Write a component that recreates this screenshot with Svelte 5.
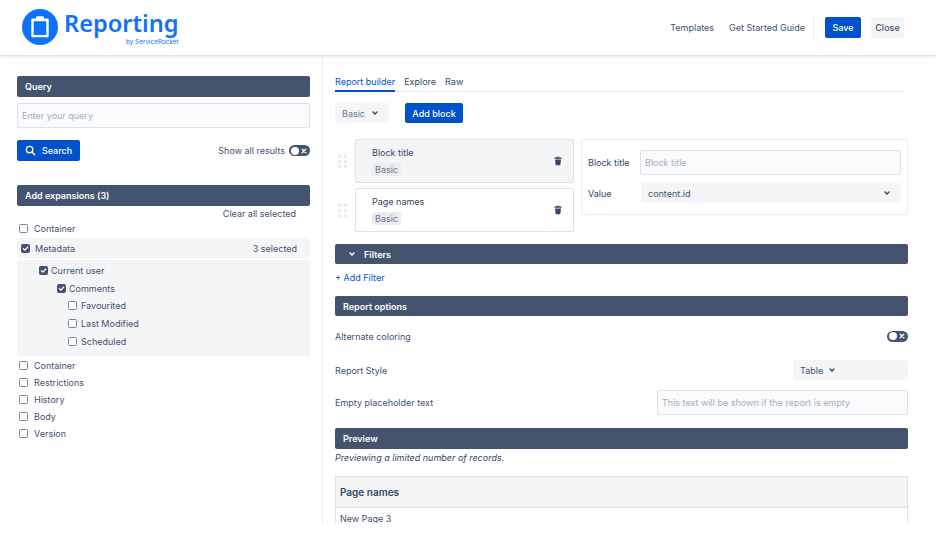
<script>
	const nested = [
		{ label: 'Current user', checked: true, level: 'l1' },
		{ label: 'Comments', checked: true, level: 'l2' },
		{ label: 'Favourited', checked: false, level: 'l3' },
		{ label: 'Last Modified', checked: false, level: 'l3' },
		{ label: 'Scheduled', checked: false, level: 'l3' }
	];
	const others = ['Container', 'Restrictions', 'History', 'Body', 'Version'];
	const blocks = [
		{ title: 'Block title', active: true },
		{ title: 'Page names', active: false }
	];
</script>

{#snippet chevron()}
	<svg class="chev" viewBox="0 0 8 8" width="8" height="8"><path d="M2 3 4 5l2-2" fill="none" stroke="currentColor" stroke-width="1.4" stroke-linecap="round" stroke-linejoin="round" /></svg>
{/snippet}

{#snippet check(on)}
	<span class="box" class:on>
		{#if on}<svg viewBox="0 0 9 9" width="9" height="9"><path d="M2.300 4.600 3.900 6.100 6.800 3" fill="none" stroke="#fff" stroke-width="1.300" stroke-linecap="round" stroke-linejoin="round" /></svg>{/if}
	</span>
{/snippet}

{#snippet toggle()}
	<span class="toggle">
		<span class="knob"></span>
		<svg viewBox="0 0 6 6" width="6" height="6"><path d="M1.200 1.200 4.800 4.800M4.800 1.200 1.200 4.800" stroke="#fff" stroke-width="1.300" stroke-linecap="round" /></svg>
	</span>
{/snippet}

{#snippet trash()}
	<svg class="trash" viewBox="0 0 10 10" width="10" height="10"><path d="M3.800.8h2.400l.4.8h2v1.100H1.400V1.600h2zM2 3.400h6l-.6 5.200c0 .4-.3.6-.7.6H3.300c-.4 0-.7-.2-.7-.6z" fill="#344563" /></svg>
{/snippet}

<div class="page">
	<header>
		<div class="logo">
			<svg viewBox="0 0 36 36" width="36" height="36">
				<circle cx="18" cy="18" r="18" fill="#0f72fb" />
				<path d="M10.500 9.500h3.300l.7-2.300h7l.7 2.300h3.300c.7 0 1.200.5 1.200 1.200v16.300c0 .7-.5 1.200-1.200 1.200h-15c-.7 0-1.200-.5-1.200-1.200V10.700c0-.7.5-1.200 1.200-1.200z" fill="#fff" />
				<rect x="11.700" y="12.200" width="12.600" height="13.800" rx=".5" fill="#0f72fb" />
			</svg>
			<div class="wordmark">
				<span class="name">Reporting</span>
				<span class="by">by ServiceRocket</span>
			</div>
		</div>
		<nav>
			<span class="link">Templates</span>
			<span class="link">Get Started Guide</span>
			<span class="sep"></span>
			<button class="btn primary save">Save</button>
			<button class="btn ghost">Close</button>
		</nav>
	</header>

	<main>
		<aside>
			<div class="bar">Query</div>
			<div class="input query">Enter your query</div>
			<div class="search-row">
				<button class="btn primary search">
					<svg viewBox="0 0 12 12" width="11" height="11"><circle cx="5" cy="5" r="3.500" fill="none" stroke="#fff" stroke-width="1.500" /><path d="m7.800 7.800 2.800 2.800" stroke="#fff" stroke-width="1.500" stroke-linecap="round" /></svg>
					Search
				</button>
				<div class="show-all">Show all results {@render toggle()}</div>
			</div>

			<div class="bar expansions">Add expansions (3)</div>
			<div class="clear">Clear all selected</div>
			<div class="item">{@render check(false)} Container</div>
			<div class="meta">
				<span class="meta-label">{@render check(true)} Metadata</span>
				<span>3 selected</span>
			</div>
			<div class="nested">
				{#each nested as n}
					<div class="nest {n.level}">{@render check(n.checked)} {n.label}</div>
				{/each}
			</div>
			<div class="others">
				{#each others as o}
					<div class="item">{@render check(false)} {o}</div>
				{/each}
			</div>
		</aside>

		<section>
			<div class="tabs">
				<span class="tab active">Report builder</span>
				<span class="tab">Explore</span>
				<span class="tab">Raw</span>
			</div>
			<div class="tools">
				<div class="select basic">Basic {@render chevron()}</div>
				<button class="btn primary add">Add block</button>
			</div>

			<div class="builder">
				<div class="cards">
					{#each blocks as b}
						<div class="card-row">
							<span class="grip">{#each Array(6) as _}<i></i>{/each}</span>
							<div class="card" class:active={b.active}>
								<div>
									<div class="card-title">{b.title}</div>
									<span class="tag">Basic</span>
								</div>
								{@render trash()}
							</div>
						</div>
					{/each}
				</div>
				<div class="props">
					<div class="prop">
						<span class="prop-label">Block title</span>
						<div class="input prop-input">Block title</div>
					</div>
					<div class="prop">
						<span class="prop-label">Value</span>
						<div class="select value">content.id {@render chevron()}</div>
					</div>
				</div>
			</div>

			<div class="bar filters">{@render chevron()} Filters</div>
			<div class="add-filter">+ Add Filter</div>

			<div class="bar options">Report options</div>
			<div class="opt alt"><span>Alternate coloring</span>{@render toggle()}</div>
			<div class="opt style">
				<span>Report Style</span>
				<div class="select table-select">Table {@render chevron()}</div>
			</div>
			<div class="opt empty">
				<span>Empty placeholder text</span>
				<div class="input placeholder">This text will be shown if the report is empty</div>
			</div>

			<div class="bar preview">Preview</div>
			<div class="note">Previewing a limited number of records.</div>
			<div class="table">
				<div class="th">Page names</div>
				<div class="td">New Page 3</div>
			</div>
		</section>
	</main>
</div>

<style>
	:global(body) {
		background: #fff;
	}
	.page {
		width: 936px;
		height: 544px;
		overflow: hidden;
		background: #fff;
		color: #42526e;
		font-family: Inter, "Liberation Sans", sans-serif;
		font-size: 9px;
	}
	header {
		height: 55px;
		box-sizing: border-box;
		display: flex;
		align-items: center;
		justify-content: space-between;
		padding: 0 32px 0 22px;
		box-shadow: 0 1px 3px rgba(9, 30, 66, 0.2);
		position: relative;
	}
	.logo {
		display: flex;
		gap: 6px;
		align-items: flex-start;
		margin-top: -1px;
	}
	.wordmark {
		display: flex;
		flex-direction: column;
		align-items: flex-end;
		color: #0f72fb;
	}
	.name {
		font-family: "Noto Sans", sans-serif;
		font-size: 23.600px;
		font-weight: 600;
		line-height: 28px;
	}
	.by {
		font-size: 6.400px;
		line-height: 7px;
		margin-top: 2px;
	}
	nav {
		display: flex;
		align-items: center;
	}
	.link {
		margin-right: 15px;
	}
	.sep {
		width: 1px;
		height: 22px;
		background: #ebecf0;
		margin: 0 11px 0 -7px;
	}
	.btn {
		border: 0;
		border-radius: 2px;
		font: inherit;
		font-weight: 500;
		height: 21px;
		padding: 0;
		display: flex;
		align-items: center;
		justify-content: center;
	}
	.primary {
		background: #0052cc;
		color: #fff;
	}
	.ghost {
		background: #f4f5f7;
		color: #42526e;
		width: 33px;
		margin-left: 10px;
	}
	.save {
		width: 36px;
	}
	main {
		display: grid;
		grid-template-columns: 323px 1fr;
		height: 468px;
		overflow: hidden;
	}
	aside {
		box-sizing: border-box;
		height: 468px;
		padding: 21px 12px 0 17px;
		border-right: 1px solid #ebecf0;
	}
	section {
		padding: 20px 28px 0 12px;
		min-width: 0;
	}
	.bar {
		height: 21px;
		box-sizing: border-box;
		background: #44546f;
		border-radius: 2px;
		color: #fff;
		font-weight: 600;
		display: flex;
		align-items: center;
		padding-left: 8px;
	}
	.input {
		box-sizing: border-box;
		background: #fafbfc;
		border: 1px solid #dfe1e6;
		border-radius: 2px;
		color: #a5adba;
		display: flex;
		align-items: center;
		padding-left: 4px;
	}
	.query {
		height: 25px;
		margin-top: 6px;
	}
	.search-row {
		display: flex;
		justify-content: space-between;
		align-items: center;
		margin-top: 12px;
	}
	.search {
		width: 63px;
		gap: 6px;
	}
	.show-all {
		display: flex;
		align-items: center;
		gap: 4px;
	}
	.toggle {
		width: 21px;
		height: 11px;
		border-radius: 6px;
		background: #44546f;
		display: inline-flex;
		align-items: center;
		justify-content: space-between;
		box-sizing: border-box;
		padding: 0 3px 0 1.500px;
	}
	.knob {
		width: 8px;
		height: 8px;
		border-radius: 50%;
		background: #fff;
	}
	.expansions {
		margin-top: 24px;
	}
	.clear {
		text-align: right;
		padding-right: 14px;
		margin-top: 2px;
		height: 12px;
		line-height: 12px;
	}
	.item {
		height: 17px;
		display: flex;
		align-items: center;
		gap: 6px;
		padding-left: 2px;
	}
	.box {
		box-sizing: border-box;
		width: 9px;
		height: 9px;
		border: 1px solid #7a869a;
		border-radius: 1.500px;
		background: #fff;
		display: inline-flex;
		align-items: center;
		justify-content: center;
		flex: none;
	}
	.box.on {
		background: #44546f;
		border-color: #44546f;
	}
	.box svg {
		margin: -1px;
	}
	.meta {
		height: 20px;
		margin-top: 1px;
		background: #f4f5f7;
		border-radius: 2px;
		display: flex;
		align-items: center;
		justify-content: space-between;
		padding: 0 13px 0 4px;
	}
	.meta-label {
		display: flex;
		align-items: center;
		gap: 5px;
	}
	.nested {
		margin-top: 2px;
		height: 96px;
		box-sizing: border-box;
		background: #f4f5f7;
		padding-top: 2px;
	}
	.nest {
		height: 17.600px;
		display: flex;
		align-items: center;
		gap: 3px;
	}
	.l1 {
		padding-left: 22px;
	}
	.l2 {
		padding-left: 40px;
	}
	.l3 {
		padding-left: 51px;
		gap: 4px;
	}
	.others {
		margin-top: 1px;
	}
	.tabs {
		display: flex;
		gap: 9px;
		height: 17px;
		border-bottom: 1px solid #ebecf0;
		margin-right: 4px;
		padding-top: 1px;
		box-sizing: border-box;
	}
	.tab {
		height: 16px;
		box-sizing: border-box;
		color: #344563;
		line-height: 12px;
	}
	.tab.active {
		color: #0052cc;
		border-bottom: 2px solid #0052cc;
	}
	.tools {
		display: flex;
		gap: 16px;
		margin-top: 11px;
		align-items: center;
	}
	.select {
		background: #f4f5f7;
		border-radius: 2px;
		height: 20px;
		display: flex;
		align-items: center;
		box-sizing: border-box;
	}
	.chev {
		flex: none;
		color: #344563;
	}
	.basic {
		width: 54px;
		padding-left: 7px;
		gap: 6px;
		color: #6b778c;
	}
	.add {
		width: 58px;
		height: 20px;
	}
	.builder {
		display: flex;
		gap: 7px;
		margin-top: 16px;
		align-items: flex-start;
	}
	.cards {
		display: flex;
		flex-direction: column;
		gap: 5px;
	}
	.card-row {
		display: flex;
		align-items: center;
		gap: 5px;
	}
	.grip {
		width: 15px;
		display: grid;
		grid-template-columns: 3px 3px;
		gap: 2px 3px;
		justify-content: center;
	}
	.grip i {
		height: 3px;
		background: #ebecf0;
		display: block;
	}
	.card {
		box-sizing: border-box;
		width: 219px;
		height: 44px;
		border: 1px solid #dfe1e6;
		border-radius: 2px;
		display: flex;
		align-items: center;
		justify-content: space-between;
		padding: 0 10px 0 16px;
		background: #fff;
	}
	.card.active {
		background: #f4f5f7;
	}
	.card-title {
		line-height: 14px;
		color: #344563;
	}
	.tag {
		display: inline-block;
		background: #ebecf0;
		border-radius: 2px;
		padding: 0 3px;
		line-height: 13px;
		margin-top: 3px;
		color: #6b778c;
	}
	.props {
		box-sizing: border-box;
		flex: 1;
		height: 76px;
		border: 1px solid #ebecf0;
		border-radius: 2px;
		padding: 10px 6px 0 6px;
	}
	.prop {
		display: flex;
		align-items: center;
		justify-content: space-between;
	}
	.prop + .prop {
		margin-top: 8px;
	}
	.prop-label {
		color: #344563;
	}
	.prop-input {
		width: 261px;
		height: 25px;
	}
	.value {
		width: 260px;
		padding: 0 10px 0 7px;
		justify-content: space-between;
	}
	.filters {
		margin-top: 12px;
		height: 20px;
		gap: 8px;
		padding-left: 13px;
	}
	.filters .chev {
		color: #fff;
	}
	.add-filter {
		color: #0052cc;
		line-height: 12px;
		margin-top: 8px;
	}
	.options {
		margin-top: 12px;
		height: 20px;
	}
	.opt {
		display: flex;
		align-items: center;
		justify-content: space-between;
	}
	.alt {
		margin-top: 14px;
		height: 12px;
	}
	.style {
		margin-top: 18px;
	}
	.table-select {
		width: 115px;
		padding-left: 7px;
		gap: 5px;
	}
	.empty {
		margin-top: 10px;
	}
	.placeholder {
		width: 251px;
		height: 25px;
	}
	.preview {
		margin-top: 13px;
	}
	.note {
		font-style: italic;
		color: #344563;
		line-height: 12px;
		margin-top: 3px;
	}
	.table {
		margin-top: 12px;
		box-sizing: border-box;
		height: 47px;
		border: 1px solid #dfe1e6;
		border-bottom: 0;
		overflow: hidden;
	}
	.th {
		height: 31px;
		box-sizing: border-box;
		background: #f4f5f7;
		border-bottom: 1px solid #dfe1e6;
		color: #344563;
		font-weight: 600;
		font-size: 10px;
		display: flex;
		align-items: center;
		padding-left: 4px;
	}
	.td {
		padding-left: 4px;
		padding-top: 6px;
		line-height: 10px;
	}
</style>
